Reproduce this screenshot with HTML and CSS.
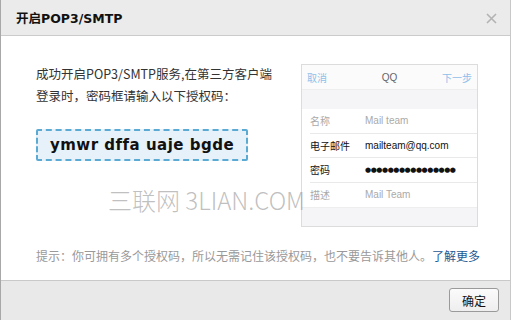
FILE: index.html
```html
<!DOCTYPE html>
<html lang="zh-CN">
<head>
<meta charset="utf-8">
<link rel="stylesheet" href="styles.css">
</head>
<body>
<div class="dialog">
  <div class="dlg-head">
    <span class="dlg-title">开启POP3/SMTP</span>
    <span class="dlg-close">
      <svg width="11" height="11" viewBox="0 0 11 11"><path d="M1 1L10 10M10 1L1 10" stroke="#b3b3b3" stroke-width="1.6" fill="none"/></svg>
    </span>
  </div>
  <div class="dlg-body">
    <div class="main">
      <div class="left">
        <p class="intro">成功开启POP3/SMTP服务,在第三方客户端<br>登录时，密码框请输入以下授权码：</p>
        <div class="code">ymwr dffa uaje bgde</div>
      </div>
      <div class="phone">
        <div class="ph-nav">
          <span class="ph-link">取消</span>
          <span class="ph-title">QQ</span>
          <span class="ph-link">下一步</span>
        </div>
        <div class="ph-gap"></div>
        <div class="ph-list">
          <div class="ph-row"><span class="ph-label muted">名称</span><span class="ph-val muted">Mail team</span></div>
          <div class="ph-row"><span class="ph-label">电子邮件</span><span class="ph-val">mailteam@qq.com</span></div>
          <div class="ph-row"><span class="ph-label">密码</span><span class="ph-val dots">●●●●●●●●●●●●●●●●</span></div>
          <div class="ph-row"><span class="ph-label muted">描述</span><span class="ph-val muted">Mail Team</span></div>
        </div>
        <div class="ph-foot"></div>
      </div>
    </div>
    <p class="hint">提示：你可拥有多个授权码，所以无需记住该授权码，也不要告诉其他人。<a class="more">了解更多</a></p>
    <div class="watermark">三联网 3LIAN.COM</div>
  </div>
  <div class="dlg-foot">
    <button class="btn">确定</button>
  </div>
</div>
</body>
</html>
```

FILE: styles.css
```css
* { box-sizing: border-box; }
html, body { margin: 0; padding: 0; background: #fff; }
body { font-family: "Noto Sans CJK SC", "Noto Sans", sans-serif; color: #333; }

.dialog {
  width: 511px;
  height: 320px;
  border-left: 1px solid #a8a8a8;
  border-right: 1px solid #c8c8c8;
  display: flex;
  flex-direction: column;
  overflow: hidden;
}

.dlg-head {
  height: 36px;
  flex: none;
  background: #ebebeb;
  border-bottom: 1px solid #cbcbcb;
  display: flex;
  align-items: center;
  justify-content: space-between;
  padding: 0 13px 0 15px;
}
.dlg-title {
  font-family: "DejaVu Sans", "Noto Sans CJK SC", sans-serif;
  font-weight: bold;
  font-size: 12.5px;
  color: #111;
}
.dlg-close { display: flex; margin-top: 1px; }

.dlg-body {
  position: relative;
  flex: 1;
  padding: 27px 0 0 35px;
}
.main {
  display: flex;
  gap: 53px;
}
.left { width: 212px; }
.intro {
  margin: 0;
  font-size: 12.5px;
  line-height: 22px;
  color: #333;
  white-space: nowrap;
}
.code {
  margin-top: 22px;
  width: 212px;
  height: 32px;
  border: 2px dashed #5aaad4;
  border-radius: 2px;
  background: #e7f1f9;
  display: flex;
  align-items: center;
  justify-content: center;
  font-family: "DejaVu Sans", sans-serif;
  font-weight: bold;
  font-size: 15px;
  letter-spacing: 0.5px;
  color: #111;
}

.phone {
  margin-top: 1px;
  width: 177px;
  border: 1px solid #dcdcdc;
  background: #f5f5f7;
  font-size: 10px;
}
.ph-nav {
  height: 25px;
  background: #fbfbfb;
  border-bottom: 1px solid #eeeeee;
  display: flex;
  align-items: center;
  justify-content: space-between;
  padding: 0 5px 0 5px;
}
.ph-link { color: #8ec0ea; }
.ph-title { color: #666; font-family: "Liberation Sans", sans-serif; padding-left: 10px; }
.ph-gap { height: 19px; }
.ph-list { background: #fff; padding-left: 8px; }
.ph-row {
  height: 24.5px;
  display: flex;
  align-items: center;
  border-bottom: 1px solid #e9e9e9;
}
.ph-row:last-child { border-bottom: none; }
.ph-label { width: 55px; color: #111; }
.ph-val { font-family: "Liberation Sans", sans-serif; color: #111; font-size: 10px; }
.ph-label.muted { color: #aaa; }
.ph-val.muted { color: #aaa; }
.dots { font-family: "DejaVu Sans", sans-serif; font-size: 7px; letter-spacing: -0.45px; }
.ph-foot { height: 19px; border-top: 1px solid #eeeeee; }

.hint {
  margin: 20px 0 0 0;
  font-size: 12px;
  line-height: 18px;
  color: #999;
  white-space: nowrap;
}
.more { color: #1d5a92; text-decoration: none; }

.watermark {
  position: absolute;
  left: 107px;
  top: 149px;
  font-family: "Noto Sans CJK SC", "Lato", sans-serif;
  font-weight: 300;
  font-size: 24px;
  line-height: 30px;
  color: rgba(150, 150, 150, 0.6);
  white-space: nowrap;
}

.dlg-foot {
  height: 40px;
  flex: none;
  background: #e9e9e9;
  border-top: 1px solid #c9c9c9;
  display: flex;
  justify-content: flex-end;
  align-items: flex-start;
  padding: 7px 11px 0 0;
}
.btn {
  width: 50px;
  height: 24px;
  border: 1px solid #9a9a9a;
  border-radius: 3px;
  background: linear-gradient(#fbfbfb, #eeeeee);
  font-family: "Noto Sans CJK SC", sans-serif;
  font-size: 12px;
  color: #111;
  padding: 0;
}
```
